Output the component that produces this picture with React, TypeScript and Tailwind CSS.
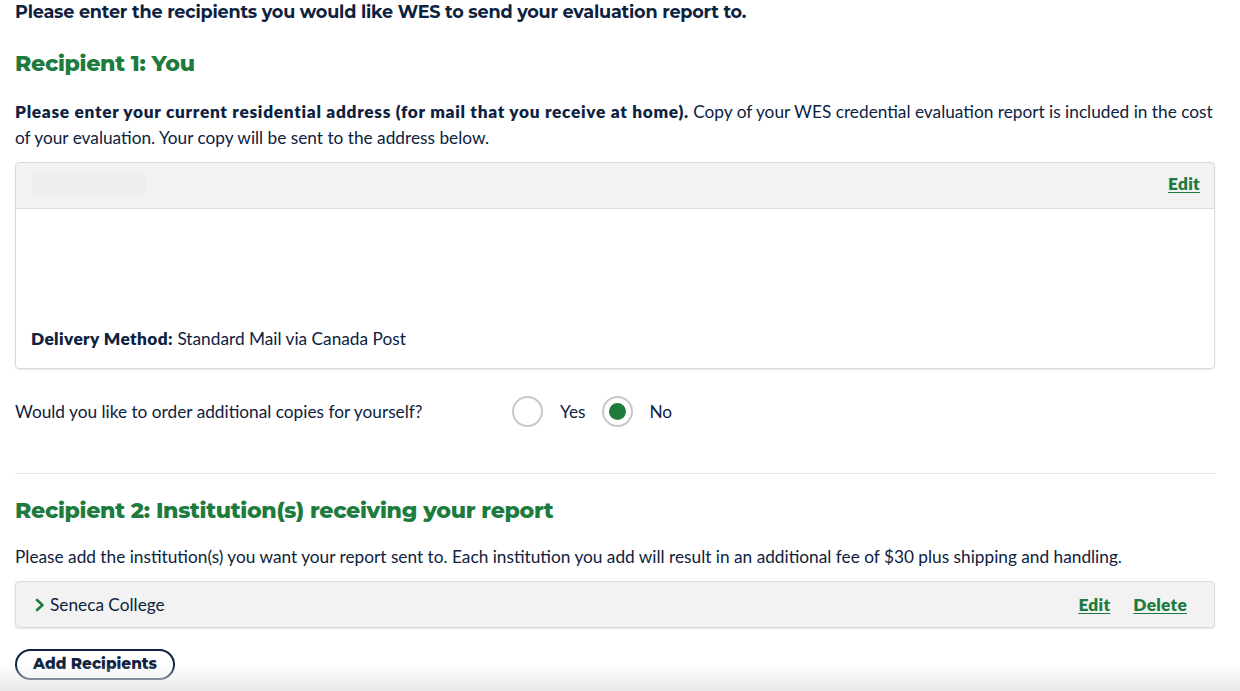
import React from "react";

const body = { fontFamily: '"Source Sans Pro", Lato, "Noto Sans", sans-serif' };
const head = { fontFamily: 'Montserrat, "Open Sans", "Noto Sans", sans-serif' };

function Radio({ checked }: { checked: boolean }) {
  return (
    <span className="flex h-[31px] w-[31px] shrink-0 items-center justify-center rounded-full border-2 border-[#c8c8c8] bg-white">
      {checked && <span className="h-[17px] w-[17px] rounded-full bg-[#1e7b3e]" />}
    </span>
  );
}

export default function App() {
  return (
    <div className="relative h-[691px] overflow-hidden bg-white text-[#0d2240]" style={body}>
      <div className="pl-[15px]">
        <div className="w-[1200px]">
          <p className="pt-[1px] text-[17.6px] font-bold leading-[22px] tracking-[-0.2px]" style={head}>
            Please enter the recipients you would like WES to send your evaluation report to.
          </p>
          <h2 className="mt-[27px] text-[22.1px] font-extrabold leading-[28px] text-[#1e7b3e] tracking-[-0.3px]" style={head}>
            Recipient 1: You
          </h2>
          <p className="mt-[21px] text-[17.25px] leading-[26px]">
            <span className="font-extrabold tracking-[0.7px]">Please enter your current residential address (for mail that you receive at home).</span>{" "}
            Copy of your WES credential evaluation report is included in the cost of your evaluation. Your copy will be sent to the address below.
          </p>
          <div className="mt-[11px] h-[207px] rounded-[4px] border border-[#d9d9d9] shadow-[0_1px_2px_rgba(0,0,0,0.08)]">
            <div className="flex h-[46px] items-center justify-between rounded-t-[4px] border-b border-[#dedede] bg-[#f2f2f2] pb-[3px] pl-[15px] pr-[14px]">
              <span className="h-[22px] w-[115px] rounded-sm bg-[#efefef]" />
              <a className="text-[17.25px] font-extrabold tracking-[0.3px] text-[#1e7b3e] underline underline-offset-2">Edit</a>
            </div>
            <div className="flex h-[160px] flex-col justify-end px-[15px] pb-[17px]">
              <p className="text-[17.25px] leading-[26px]">
                <span className="font-extrabold tracking-[0.4px]">Delivery Method:</span> Standard Mail via Canada Post
              </p>
            </div>
          </div>
          <div className="mt-[27px] flex items-center text-[17.25px]">
            <span className="w-[497px]">Would you like to order additional copies for yourself?</span>
            <Radio checked={false} />
            <span className="ml-[17px] mr-[17px]">Yes</span>
            <Radio checked />
            <span className="ml-[16px]">No</span>
          </div>
          <div className="mt-[46px] border-t border-[#e6e6e6]" />
          <h2 className="mt-[23px] text-[22.1px] font-extrabold leading-[28px] text-[#1e7b3e] tracking-[-0.3px]" style={head}>
            Recipient 2: Institution(s) receiving your report
          </h2>
          <p className="mt-[19px] text-[17.25px] leading-[26px]">
            Please add the institution(s) you want your report sent to. Each institution you add will result in an additional fee of $30 plus shipping and handling.
          </p>
          <div className="mt-[11px] flex h-[47px] items-center justify-between rounded-[4px] border border-[#dcdcdc] bg-[#f2f2f2] pl-[18px] pr-[27px] shadow-[0_1px_2px_rgba(0,0,0,0.1)]">
            <div className="flex items-center gap-[4px] text-[17.25px]">
              <svg width="12" height="14" viewBox="0 0 12 14" className="text-[#1e7b3e]">
                <path d="M3 2 L8.5 7 L3 12" fill="none" stroke="currentColor" strokeWidth="2.6" strokeLinecap="round" strokeLinejoin="round" />
              </svg>
              <span>Seneca College</span>
            </div>
            <div className="flex items-center gap-[23px] text-[17.25px] font-extrabold tracking-[0.3px] text-[#1e7b3e]">
              <a className="underline underline-offset-2">Edit</a>
              <a className="underline underline-offset-2">Delete</a>
            </div>
          </div>
          <button
            className="mt-[21px] flex h-[31px] w-[160px] items-center justify-center rounded-full border-2 border-[#0d2240] text-[15.3px] font-extrabold text-[#0d2240]"
            style={head}
          >
            Add Recipients
          </button>
        </div>
      </div>
      <div className="pointer-events-none absolute bottom-0 left-0 right-0 h-[26px] bg-gradient-to-b from-transparent to-[#e9e9e9]" />
    </div>
  );
}
